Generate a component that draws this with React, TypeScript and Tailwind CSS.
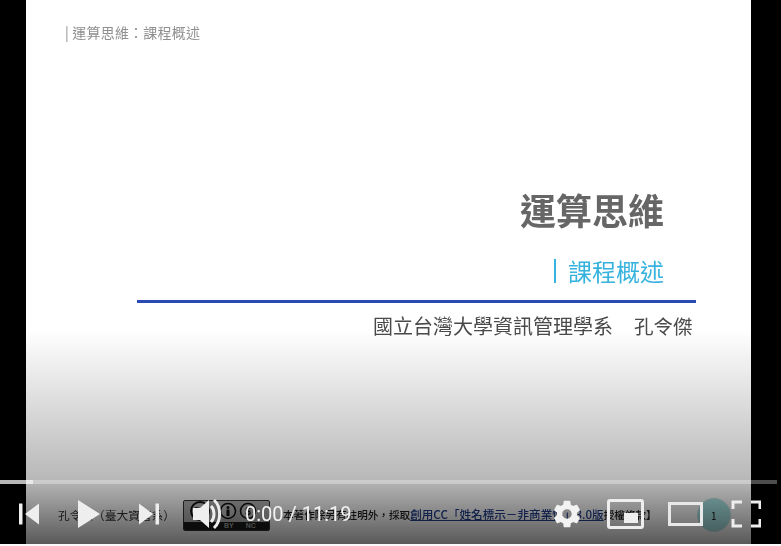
import React from "react";

const cjk = { fontFamily: '"Noto Sans CJK TC", "Noto Sans CJK SC", sans-serif' };

function CcBadge() {
  return (
    <div className="flex h-[31px] w-[87px] flex-col overflow-hidden rounded-[2px] border border-[#333] bg-[#b5b5b5]">
      <div className="flex h-[21px] items-center pl-[4px]">
        <svg width="80" height="20" viewBox="0 0 80 20">
          <circle cx="12" cy="10" r="9" fill="#c4c4c4" stroke="#111" strokeWidth="2" />
          <text x="12" y="14" textAnchor="middle" fontSize="10" fontWeight="700" fill="#111" fontFamily="Liberation Sans">CC</text>
          <circle cx="40" cy="10" r="7.500" fill="#c4c4c4" stroke="#111" strokeWidth="1.6" />
          <circle cx="40" cy="6.500" r="1.500" fill="#111" />
          <rect x="38.500" y="8.500" width="3" height="6.500" fill="#111" />
          <circle cx="60" cy="10" r="7.500" fill="#c4c4c4" stroke="#111" strokeWidth="1.6" />
          <text x="60" y="14" textAnchor="middle" fontSize="10" fontWeight="700" fill="#111" fontFamily="Liberation Sans">$</text>
        </svg>
      </div>
      <div className="flex h-[8px] items-center gap-[12px] bg-[#1c1c1c] pl-[40px] text-[7px] font-bold leading-none text-[#aaa]" style={{ fontFamily: '"Liberation Sans", sans-serif' }}>
        <span>BY</span>
        <span>NC</span>
      </div>
    </div>
  );
}

function Gear() {
  return (
    <svg width="32" height="32" viewBox="0 0 24 24" fill="#f2f2f2">
      <path fillRule="evenodd" d="M19.43 12.98c.04-.32.07-.64.07-.98s-.03-.66-.07-.98l2.11-1.65c.19-.15.24-.42.12-.64l-2-3.46c-.12-.22-.39-.3-.61-.22l-2.49 1c-.52-.4-1.08-.73-1.69-.98l-.38-2.65C14.46 2.18 14.25 2 14 2h-4c-.25 0-.46.18-.49.42l-.38 2.65c-.61.25-1.17.59-1.69.98l-2.49-1c-.23-.09-.49 0-.61.22l-2 3.46c-.13.22-.07.49.12.64l2.11 1.65c-.04.32-.07.65-.07.98s.03.66.07.98l-2.11 1.65c-.19.15-.24.42-.12.64l2 3.46c.12.22.39.3.61.22l2.49-1c.52.4 1.08.73 1.69.98l.38 2.65c.03.24.24.42.49.42h4c.25 0 .46-.18.49-.42l.38-2.65c.61-.25 1.17-.59 1.69-.98l2.49 1c.23.09.49 0 .61-.22l2-3.46c.12-.22.07-.49-.12-.64l-2.11-1.65zM12 15.500c-1.93 0-3.500-1.57-3.500-3.500s1.57-3.500 3.500-3.500 3.500 1.57 3.500 3.500-1.57 3.500-3.500 3.500z" />
    </svg>
  );
}

export default function App() {
  return (
    <div className="relative h-[546px] w-[781px] overflow-hidden bg-[#f9f9f9]" style={cjk}>
      <div className="flex h-[544px] bg-black">
        <div className="ml-[26px] flex w-[725px] flex-col bg-white">
          <div className="pl-[39px] pt-[23px] text-[14px] leading-[18px] tracking-[0.2px] text-[#8f8f8f] blur-[0.5px]">| 運算思維：課程概述</div>
          <div className="mt-[144px] flex flex-col items-end pr-[87px] blur-[0.5px]">
            <div className="text-[36px] font-bold leading-[48px] text-[#666]">運算思維</div>
            <div className="mt-[22px] flex items-center gap-[12px] text-[24px] leading-[32px] text-[#35b2de]">
              <span className="h-[24px] w-[2px] bg-[#35b2de]" />
              <span>課程概述</span>
            </div>
          </div>
          <div className="ml-[111px] mt-[13px] h-[3px] w-[559px] bg-[#2a4ab3]" />
          <div className="ml-[347px] mt-[10px] flex items-center gap-[21px] text-[20px] leading-[26px] text-[#4a4a4a] blur-[0.5px]">
            <span>國立台灣大學資訊管理學系</span>
            <span className="text-[19.5px]">孔令傑</span>
          </div>
          <div className="mt-[159px] flex items-center pl-[32px] blur-[0.5px]">
            <span className="w-[125px] text-[11.7px] text-[#333]">孔令傑（臺大資管系）</span>
            <CcBadge />
            <span className="ml-[13px] whitespace-nowrap text-[10.6px] font-medium text-[#222]">
              本著作除另有註明外，採取<span className="text-[11.6px] text-[#23408f] underline">創用CC「姓名標示－非商業性」3.0版</span>授權條款】
            </span>
            <span className="ml-[40px] flex h-[34px] w-[34px] items-center justify-center rounded-full border border-[#c4e4e4] bg-[#a8e4e4] text-[10px] text-[#111]">1</span>
          </div>
        </div>
      </div>

      {/* player chrome overlay */}
      <div className="absolute left-0 right-0 top-[330px] h-[214px] bg-gradient-to-b from-black/0 via-black/28 via-70% to-black/65" />
      <div className="absolute left-0 right-[4px] top-[480px] h-[4px] bg-white/30 blur-[0.3px]">
        <div className="h-full w-[33px] bg-white/60" />
      </div>
      <div className="absolute left-0 top-[496px] flex h-[36px] w-[781px] items-center text-[#eee] blur-[0.3px]">
        <svg className="ml-[17px]" width="24" height="24" viewBox="0 0 24 24" fill="#eee">
          <rect x="2" y="1.500" width="3.500" height="21" />
          <path d="M22 1.500v21L8 12z" />
        </svg>
        <svg className="ml-[36px]" width="26" height="30" viewBox="0 0 26 30" fill="#eee">
          <path d="M1 1l22 14L1 29z" />
        </svg>
        <svg className="ml-[34px]" width="24" height="24" viewBox="0 0 24 24" fill="#eee">
          <path d="M2 1.500v21L16 12z" />
          <rect x="18.500" y="1.500" width="3.500" height="21" />
        </svg>
        <svg className="ml-[28px]" width="34" height="34" viewBox="0 0 34 34" fill="none">
          <path d="M4 11h7l9-8v28l-9-8H4z" fill="#eee" />
          <path d="M22 9c4 4 4 12 0 16" stroke="#eee" strokeWidth="3" />
          <path d="M25 3c7.500 7 7.500 21 0 28" stroke="#eee" strokeWidth="3" />
        </svg>
        <span className="ml-[22px] w-[105px] whitespace-nowrap text-[20px] text-[#f2f2f2]" style={{ fontFamily: "Roboto, sans-serif" }}>0:00 / 11:19</span>
        <span className="ml-[201px]"><Gear /></span>
        <div className="relative ml-[24px] h-[30px] w-[37px] rounded-[3px] border-[3px] border-[#eee]">
          <div className="absolute bottom-[3px] right-[3px] h-[10px] w-[14px] bg-[#eee]" />
        </div>
        <div className="ml-[24px] h-[24px] w-[35px] border-[3px] border-[#e8e8e8]" />
        <svg className="ml-[28px]" width="30" height="30" viewBox="0 0 30 30" fill="none" stroke="#eee" strokeWidth="3">
          <path d="M2 10V3h9M20 3h9v7M29 20v7h-9M11 27H2v-7" />
        </svg>
      </div>
    </div>
  );
}
